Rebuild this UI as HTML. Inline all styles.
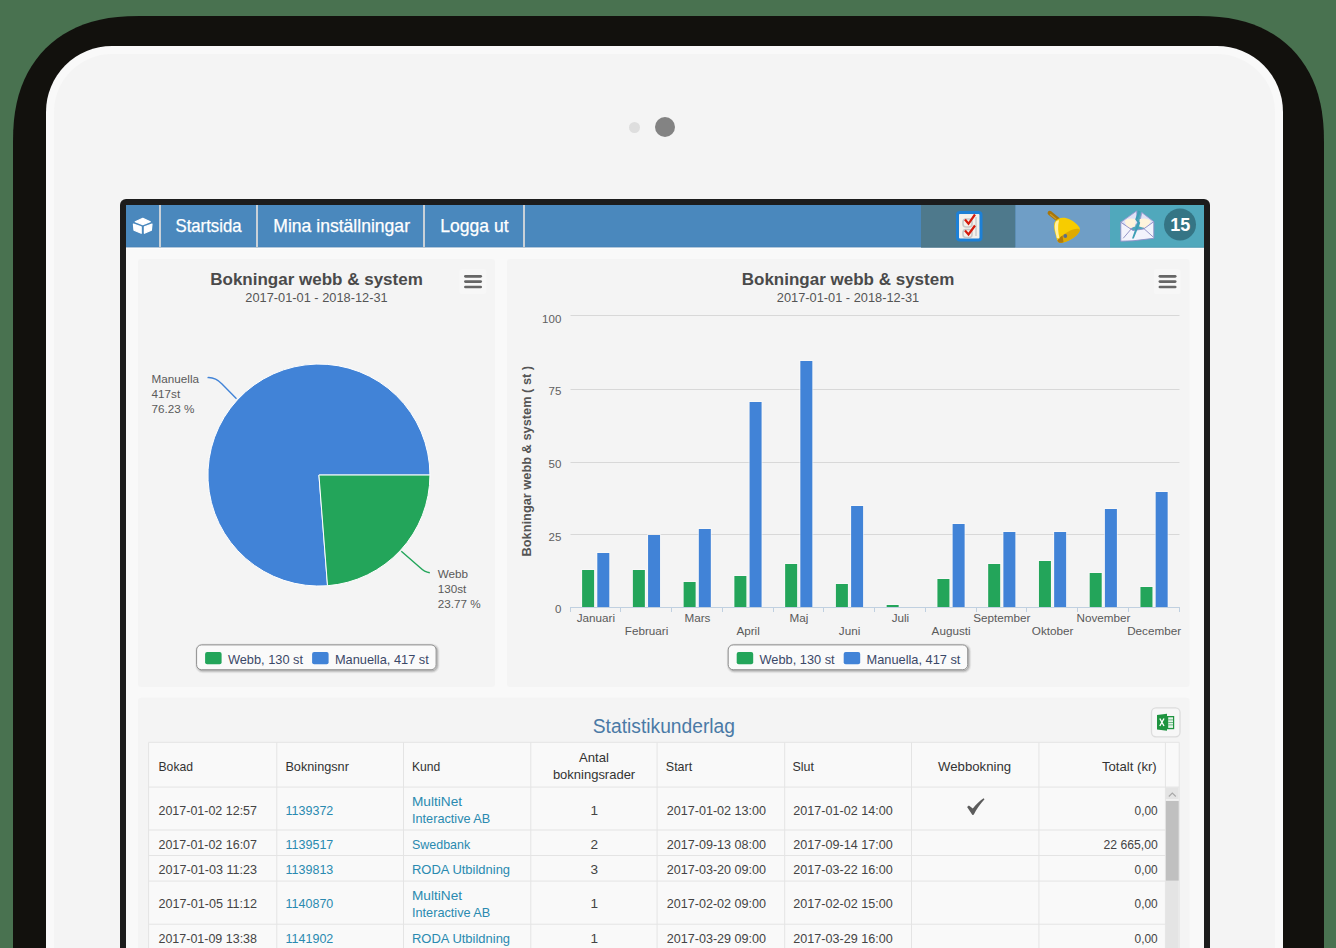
<!DOCTYPE html>
<html><head><meta charset="utf-8"><title>Statistik</title>
<style>
html,body{margin:0;padding:0;width:1336px;height:948px;overflow:hidden;background:#497250;font-family:"Liberation Sans",sans-serif;}
svg{display:block;position:absolute;left:0;top:0}
</style></head><body>
<svg width="1336" height="948" viewBox="0 0 1336 948">
<rect x="0" y="0" width="1336" height="948" fill="#497250"/>
<path d="M13.00,1100.00 L13.00,143.00 L13.23,130.65 L13.93,120.72 L15.09,111.58 L16.71,103.00 L18.78,94.86 L21.31,87.12 L24.28,79.76 L27.69,72.77 L31.53,66.15 L35.80,59.91 L40.48,54.04 L45.56,48.56 L51.04,43.48 L56.91,38.80 L63.15,34.53 L69.77,30.69 L76.76,27.28 L84.12,24.31 L91.86,21.78 L100.00,19.71 L108.58,18.09 L117.72,16.93 L127.65,16.23 L140.00,16.00 L1197.00,16.00 L1209.35,16.23 L1219.28,16.93 L1228.42,18.09 L1237.00,19.71 L1245.14,21.78 L1252.88,24.31 L1260.24,27.28 L1267.23,30.69 L1273.85,34.53 L1280.09,38.80 L1285.96,43.48 L1291.44,48.56 L1296.52,54.04 L1301.20,59.91 L1305.47,66.15 L1309.31,72.77 L1312.72,79.76 L1315.69,87.12 L1318.22,94.86 L1320.29,103.00 L1321.91,111.58 L1323.07,120.72 L1323.77,130.65 L1324.00,143.00 L1324.00,1100.00 Z" fill="#12110d"/>
<rect x="46" y="46" width="1237" height="1100" rx="66" ry="66" fill="#f9f9f9"/>
<rect x="54" y="54" width="1221" height="1100" rx="58" ry="58" fill="#f4f4f4"/>
<circle cx="634.5" cy="127.5" r="5.5" fill="#dedede"/>
<circle cx="665" cy="127" r="10" fill="#838383"/>
<rect x="120" y="199" width="1090" height="900" rx="6" ry="6" fill="#1c1c1c"/>
<rect x="126" y="205" width="1078" height="900" fill="#f9f9f9"/>
<rect x="126" y="205" width="1078" height="42.6" fill="#4a88bd"/>
<rect x="126" y="247.6" width="1078" height="1.2" fill="#fefefe"/>
<rect x="159" y="205" width="2" height="42.6" fill="#c9d1d8"/>
<rect x="256" y="205" width="2" height="42.6" fill="#c9d1d8"/>
<rect x="423" y="205" width="2" height="42.6" fill="#c9d1d8"/>
<rect x="523" y="205" width="2" height="42.6" fill="#c9d1d8"/>
<rect x="921" y="205" width="94.5" height="42.6" fill="#4e798c"/>
<rect x="1015.5" y="205" width="94.5" height="42.6" fill="#6f9ec6"/>
<rect x="1110" y="205" width="94" height="42.6" fill="#50a8bc"/>
<rect x="126" y="246.8" width="1078" height="0.8" fill="#000" fill-opacity="0.08"/>
<g fill="#ffffff" stroke="#ffffff" stroke-width="1.2" stroke-linejoin="round"><polygon points="142.8,218.3 150.3,221.8 142.8,224.6 135.2,221.8"/><polygon points="133.4,224 141.2,226.9 141.2,233.3 134,230.3"/><polygon points="144.4,226.9 152,224 151.4,230.3 144.4,233.3"/></g>
<text x="175.5" y="232" font-family="Liberation Sans" font-size="17.8" fill="#ffffff" stroke="#ffffff" stroke-width="0.25" textLength="66" lengthAdjust="spacingAndGlyphs">Startsida</text>
<text x="273.3" y="232" font-family="Liberation Sans" font-size="17.8" fill="#ffffff" stroke="#ffffff" stroke-width="0.25" textLength="136.7" lengthAdjust="spacingAndGlyphs">Mina inställningar</text>
<text x="440.3" y="232" font-family="Liberation Sans" font-size="17.8" fill="#ffffff" stroke="#ffffff" stroke-width="0.25" textLength="68.2" lengthAdjust="spacingAndGlyphs">Logga ut</text>
<rect x="957.5" y="212.5" width="23.5" height="27.5" rx="2.5" fill="#eeeeee" stroke="#1d80d6" stroke-width="3"/>
<rect x="959.5" y="214.5" width="19.5" height="23.5" fill="#f4f1ec"/>
<rect x="963" y="219" width="9" height="8" rx="3" fill="none" stroke="#c8c8c8" stroke-width="1.6"/>
<rect x="963" y="229.5" width="9" height="8" rx="3" fill="none" stroke="#c8c8c8" stroke-width="1.6"/>
<rect x="975" y="217" width="2" height="19" fill="#d6d6d6"/>
<polyline points="965,219.5 968.5,223.8 975,214.5" fill="none" stroke="#d41a0c" stroke-width="2.2" stroke-linejoin="miter"/>
<polyline points="965,230.5 968.5,234.5 975,225.5" fill="none" stroke="#d41a0c" stroke-width="2.2" stroke-linejoin="miter"/>
<line x1="1049.8" y1="213" x2="1058" y2="219.6" stroke="#a8760a" stroke-width="4.4" stroke-linecap="round"/>
<line x1="1050.5" y1="214.5" x2="1056" y2="219" stroke="#c99a2a" stroke-width="1.2" stroke-linecap="round"/>
<path d="M1054.5,222.5 C1057,217.5 1064,216.5 1070,219.5 C1074,221.5 1077,224 1079.5,227.5 C1080.5,230 1079,233.5 1075,236.5 C1071,239.5 1066,242 1061,242.8 C1058.5,243 1057.5,241.5 1057,239.5 C1056,235 1053,229 1054.5,222.5 Z" fill="#f7cc00"/>
<path d="M1057.5,240.5 C1061,236 1067,231.5 1073,229.5 C1077,228.3 1080,228.8 1079.8,230.5 C1079,234 1073,239 1066,241.8 C1061.5,243.3 1058,243.2 1057.5,240.5 Z" fill="#e0aa00"/>
<path d="M1057.5,240.5 C1058.5,238.5 1060.5,236.8 1062.5,235.5 L1063.5,242.2 C1060.5,243.2 1058,243 1057.5,240.5 Z" fill="#b07a0c"/>
<path d="M1056.8,238 C1056,233 1053.6,228 1055.3,222.8 C1056,221 1058,220 1059,220.5 C1057.5,226 1058,232 1059.5,238.5 Z" fill="#fff0a0"/>
<circle cx="1065.3" cy="236" r="1.9" fill="#5a6e8a"/>
<polygon points="1120.8,222.3 1136.6,211 1137.5,223 1131,229" fill="#dfe2f6" stroke="#9a9ad0" stroke-width="0.9" stroke-linejoin="round"/>
<polygon points="1141.8,212.5 1153.8,221.7 1145,229 1139.5,223" fill="#dfe2f6" stroke="#9a9ad0" stroke-width="0.9" stroke-linejoin="round"/>
<path d="M1124.8,221 C1126,218.5 1131,217.8 1135.8,219 L1135.2,226.5 L1127,229 Z" fill="#fff4dc"/>
<path d="M1139.8,219 C1144,217.8 1149,218.2 1150.8,221.5 L1146,228.5 L1139.2,226.5 Z" fill="#fff4dc"/>
<path d="M1120.8,222.3 L1133,230.5 L1143.5,229 L1153.8,221.7 L1153.8,238.3 L1133,240.8 L1120.8,241.2 Z" fill="#f3f3fc" stroke="#9090c8" stroke-width="0.9" stroke-linejoin="round"/>
<path d="M1123.2,238.3 L1131.5,228.6 M1143,227.8 L1153.2,237" stroke="#8a8ac0" stroke-width="0.9" fill="none"/>
<path d="M1138.3,210.5 L1135.2,219.5 L1137.6,222.5 L1132,238.5 L1133.8,238.5 L1140.2,222.8 L1137.6,219.8 L1140.6,211.5 Z" fill="#3f9fb6"/>
<circle cx="1180" cy="224.5" r="16" fill="#357585"/>
<text x="1180.3" y="230.8" font-family="Liberation Sans" font-size="18" font-weight="bold" fill="#ffffff" text-anchor="middle">15</text>
<rect x="138" y="259" width="357" height="428" rx="3" fill="#f4f4f4"/>
<rect x="507" y="259" width="682.5" height="428" rx="3" fill="#f4f4f4"/>
<rect x="138" y="697.8" width="1051.5" height="300" rx="3" fill="#f4f4f4"/>
<rect x="459.5" y="269.2" width="26.7" height="24.9" rx="2" fill="#f7f7f7"/>
<line x1="465.4" y1="276.3" x2="480.7" y2="276.3" stroke="#666666" stroke-width="2.7" stroke-linecap="round"/>
<line x1="465.4" y1="281.6" x2="480.7" y2="281.6" stroke="#666666" stroke-width="2.7" stroke-linecap="round"/>
<line x1="465.4" y1="287.0" x2="480.7" y2="287.0" stroke="#666666" stroke-width="2.7" stroke-linecap="round"/>
<text x="316.5" y="285.4" font-family="Liberation Sans" font-size="17" font-weight="bold" fill="#4a4a4a" text-anchor="middle">Bokningar webb &amp; system</text>
<text x="316.5" y="301.5" font-family="Liberation Sans" font-size="12.8" fill="#555555" text-anchor="middle">2017-01-01 - 2018-12-31</text>
<rect x="197.6" y="645.9" width="239.5" height="24.8" rx="5" fill="none" stroke="#000" stroke-opacity="0.05" stroke-width="5"/>
<rect x="197.6" y="645.9" width="239.5" height="24.8" rx="5" fill="none" stroke="#000" stroke-opacity="0.10" stroke-width="3"/>
<rect x="197.6" y="645.9" width="239.5" height="24.8" rx="5" fill="none" stroke="#000" stroke-opacity="0.15" stroke-width="1"/>
<rect x="196.6" y="644.9" width="239.5" height="24.8" rx="5" fill="#fafafa" stroke="#909090" stroke-width="1"/>
<rect x="205.1" y="652" width="16.5" height="12.3" rx="2" fill="#23a55a"/>
<text x="227.9" y="663.5" font-family="Liberation Sans" font-size="12.8" fill="#3a4868">Webb, 130 st</text>
<rect x="312.1" y="652" width="16.5" height="12.3" rx="2" fill="#4183d7"/>
<text x="334.9" y="663.5" font-family="Liberation Sans" font-size="12.8" fill="#3a4868">Manuella, 417 st</text>
<rect x="1154.0" y="269.2" width="26.7" height="24.9" rx="2" fill="#f7f7f7"/>
<line x1="1159.9" y1="276.3" x2="1175.2" y2="276.3" stroke="#666666" stroke-width="2.7" stroke-linecap="round"/>
<line x1="1159.9" y1="281.6" x2="1175.2" y2="281.6" stroke="#666666" stroke-width="2.7" stroke-linecap="round"/>
<line x1="1159.9" y1="287.0" x2="1175.2" y2="287.0" stroke="#666666" stroke-width="2.7" stroke-linecap="round"/>
<text x="848.0" y="285.4" font-family="Liberation Sans" font-size="17" font-weight="bold" fill="#4a4a4a" text-anchor="middle">Bokningar webb &amp; system</text>
<text x="848.0" y="301.5" font-family="Liberation Sans" font-size="12.8" fill="#555555" text-anchor="middle">2017-01-01 - 2018-12-31</text>
<rect x="729.2" y="645.9" width="239.5" height="24.8" rx="5" fill="none" stroke="#000" stroke-opacity="0.05" stroke-width="5"/>
<rect x="729.2" y="645.9" width="239.5" height="24.8" rx="5" fill="none" stroke="#000" stroke-opacity="0.10" stroke-width="3"/>
<rect x="729.2" y="645.9" width="239.5" height="24.8" rx="5" fill="none" stroke="#000" stroke-opacity="0.15" stroke-width="1"/>
<rect x="728.2" y="644.9" width="239.5" height="24.8" rx="5" fill="#fafafa" stroke="#909090" stroke-width="1"/>
<rect x="736.7" y="652" width="16.5" height="12.3" rx="2" fill="#23a55a"/>
<text x="759.5" y="663.5" font-family="Liberation Sans" font-size="12.8" fill="#3a4868">Webb, 130 st</text>
<rect x="843.7" y="652" width="16.5" height="12.3" rx="2" fill="#4183d7"/>
<text x="866.5" y="663.5" font-family="Liberation Sans" font-size="12.8" fill="#3a4868">Manuella, 417 st</text>
<path d="M318.95,475.05 L327.52,585.72 A111.0,111.0 0 1,1 429.95,475.05 Z" fill="#4183d7" stroke="#ffffff" stroke-width="1" stroke-linejoin="round"/>
<path d="M318.95,475.05 L429.95,475.05 A111.0,111.0 0 0,1 327.52,585.72 Z" fill="#23a55a" stroke="#ffffff" stroke-width="1" stroke-linejoin="round"/>
<path d="M207.5,377.6 C213,377.2 217,378.8 222,384 L236.5,398.8" fill="none" stroke="#4183d7" stroke-width="1.4"/>
<path d="M401.3,551.3 L419.4,567 C423,570.5 426,572.3 429.8,572.8" fill="none" stroke="#23a55a" stroke-width="1.4"/>
<text x="151.6" y="382.8" font-family="Liberation Sans" font-size="11.7" fill="#5a5a5a">Manuella</text>
<text x="151.6" y="397.7" font-family="Liberation Sans" font-size="11.7" fill="#5a5a5a">417st</text>
<text x="151.6" y="412.6" font-family="Liberation Sans" font-size="11.7" fill="#5a5a5a">76.23 %</text>
<text x="437.7" y="577.5" font-family="Liberation Sans" font-size="11.7" fill="#5a5a5a">Webb</text>
<text x="437.7" y="592.6" font-family="Liberation Sans" font-size="11.7" fill="#5a5a5a">130st</text>
<text x="437.7" y="607.7" font-family="Liberation Sans" font-size="11.7" fill="#5a5a5a">23.77 %</text>
<rect x="570.5" y="315" width="609" height="1" fill="#d8d8d8"/>
<rect x="570.5" y="389" width="609" height="1" fill="#d8d8d8"/>
<rect x="570.5" y="462" width="609" height="1" fill="#d8d8d8"/>
<rect x="570.5" y="534" width="609" height="1" fill="#d8d8d8"/>
<text x="561.3" y="323.0" font-family="Liberation Sans" font-size="11.5" fill="#606060" text-anchor="end">100</text>
<text x="561.3" y="395.0" font-family="Liberation Sans" font-size="11.5" fill="#606060" text-anchor="end">75</text>
<text x="561.3" y="468.0" font-family="Liberation Sans" font-size="11.5" fill="#606060" text-anchor="end">50</text>
<text x="561.3" y="540.8" font-family="Liberation Sans" font-size="11.5" fill="#606060" text-anchor="end">25</text>
<text x="561.3" y="613.0" font-family="Liberation Sans" font-size="11.5" fill="#606060" text-anchor="end">0</text>
<text transform="translate(531.2,461.2) rotate(-90)" x="0" y="0" font-family="Liberation Sans" font-size="12.8" font-weight="bold" fill="#555555" text-anchor="middle">Bokningar webb &amp; system ( st )</text>
<rect x="581.10" y="569" width="14" height="38" fill="#fcfcfc" fill-opacity="0.55"/>
<rect x="582.10" y="570" width="12" height="37" fill="#23a55a"/>
<rect x="596.30" y="552" width="14" height="55" fill="#fcfcfc" fill-opacity="0.55"/>
<rect x="597.30" y="553" width="12" height="54" fill="#4183d7"/>
<text x="595.9" y="621.6" font-family="Liberation Sans" font-size="11.7" fill="#5a5a5a" text-anchor="middle">Januari</text>
<rect x="631.86" y="569" width="14" height="38" fill="#fcfcfc" fill-opacity="0.55"/>
<rect x="632.86" y="570" width="12" height="37" fill="#23a55a"/>
<rect x="647.06" y="534" width="14" height="73" fill="#fcfcfc" fill-opacity="0.55"/>
<rect x="648.06" y="535" width="12" height="72" fill="#4183d7"/>
<text x="646.6" y="635.3" font-family="Liberation Sans" font-size="11.7" fill="#5a5a5a" text-anchor="middle">Februari</text>
<rect x="682.62" y="581" width="14" height="26" fill="#fcfcfc" fill-opacity="0.55"/>
<rect x="683.62" y="582" width="12" height="25" fill="#23a55a"/>
<rect x="697.82" y="528" width="14" height="79" fill="#fcfcfc" fill-opacity="0.55"/>
<rect x="698.82" y="529" width="12" height="78" fill="#4183d7"/>
<text x="697.4" y="621.6" font-family="Liberation Sans" font-size="11.7" fill="#5a5a5a" text-anchor="middle">Mars</text>
<rect x="733.38" y="575" width="14" height="32" fill="#fcfcfc" fill-opacity="0.55"/>
<rect x="734.38" y="576" width="12" height="31" fill="#23a55a"/>
<rect x="748.58" y="401" width="14" height="206" fill="#fcfcfc" fill-opacity="0.55"/>
<rect x="749.58" y="402" width="12" height="205" fill="#4183d7"/>
<text x="748.1" y="635.3" font-family="Liberation Sans" font-size="11.7" fill="#5a5a5a" text-anchor="middle">April</text>
<rect x="784.14" y="563" width="14" height="44" fill="#fcfcfc" fill-opacity="0.55"/>
<rect x="785.14" y="564" width="12" height="43" fill="#23a55a"/>
<rect x="799.34" y="360" width="14" height="247" fill="#fcfcfc" fill-opacity="0.55"/>
<rect x="800.34" y="361" width="12" height="246" fill="#4183d7"/>
<text x="798.9" y="621.6" font-family="Liberation Sans" font-size="11.7" fill="#5a5a5a" text-anchor="middle">Maj</text>
<rect x="834.90" y="583" width="14" height="24" fill="#fcfcfc" fill-opacity="0.55"/>
<rect x="835.90" y="584" width="12" height="23" fill="#23a55a"/>
<rect x="850.10" y="505" width="14" height="102" fill="#fcfcfc" fill-opacity="0.55"/>
<rect x="851.10" y="506" width="12" height="101" fill="#4183d7"/>
<text x="849.6" y="635.3" font-family="Liberation Sans" font-size="11.7" fill="#5a5a5a" text-anchor="middle">Juni</text>
<rect x="885.66" y="604" width="14" height="3" fill="#fcfcfc" fill-opacity="0.55"/>
<rect x="886.66" y="605" width="12" height="2" fill="#23a55a"/>
<text x="900.4" y="621.6" font-family="Liberation Sans" font-size="11.7" fill="#5a5a5a" text-anchor="middle">Juli</text>
<rect x="936.42" y="578" width="14" height="29" fill="#fcfcfc" fill-opacity="0.55"/>
<rect x="937.42" y="579" width="12" height="28" fill="#23a55a"/>
<rect x="951.62" y="523" width="14" height="84" fill="#fcfcfc" fill-opacity="0.55"/>
<rect x="952.62" y="524" width="12" height="83" fill="#4183d7"/>
<text x="951.1" y="635.3" font-family="Liberation Sans" font-size="11.7" fill="#5a5a5a" text-anchor="middle">Augusti</text>
<rect x="987.18" y="563" width="14" height="44" fill="#fcfcfc" fill-opacity="0.55"/>
<rect x="988.18" y="564" width="12" height="43" fill="#23a55a"/>
<rect x="1002.38" y="531" width="14" height="76" fill="#fcfcfc" fill-opacity="0.55"/>
<rect x="1003.38" y="532" width="12" height="75" fill="#4183d7"/>
<text x="1001.9" y="621.6" font-family="Liberation Sans" font-size="11.7" fill="#5a5a5a" text-anchor="middle">September</text>
<rect x="1037.94" y="560" width="14" height="47" fill="#fcfcfc" fill-opacity="0.55"/>
<rect x="1038.94" y="561" width="12" height="46" fill="#23a55a"/>
<rect x="1053.14" y="531" width="14" height="76" fill="#fcfcfc" fill-opacity="0.55"/>
<rect x="1054.14" y="532" width="12" height="75" fill="#4183d7"/>
<text x="1052.6" y="635.3" font-family="Liberation Sans" font-size="11.7" fill="#5a5a5a" text-anchor="middle">Oktober</text>
<rect x="1088.70" y="572" width="14" height="35" fill="#fcfcfc" fill-opacity="0.55"/>
<rect x="1089.70" y="573" width="12" height="34" fill="#23a55a"/>
<rect x="1103.90" y="508" width="14" height="99" fill="#fcfcfc" fill-opacity="0.55"/>
<rect x="1104.90" y="509" width="12" height="98" fill="#4183d7"/>
<text x="1103.4" y="621.6" font-family="Liberation Sans" font-size="11.7" fill="#5a5a5a" text-anchor="middle">November</text>
<rect x="1139.46" y="586" width="14" height="21" fill="#fcfcfc" fill-opacity="0.55"/>
<rect x="1140.46" y="587" width="12" height="20" fill="#23a55a"/>
<rect x="1154.66" y="491" width="14" height="116" fill="#fcfcfc" fill-opacity="0.55"/>
<rect x="1155.66" y="492" width="12" height="115" fill="#4183d7"/>
<text x="1154.1" y="635.3" font-family="Liberation Sans" font-size="11.7" fill="#5a5a5a" text-anchor="middle">December</text>
<rect x="570" y="607" width="610" height="1" fill="#c0d0e0"/>
<rect x="570" y="607" width="1" height="5" fill="#c0d0e0"/>
<rect x="620" y="607" width="1" height="5" fill="#c0d0e0"/>
<rect x="671" y="607" width="1" height="5" fill="#c0d0e0"/>
<rect x="722" y="607" width="1" height="5" fill="#c0d0e0"/>
<rect x="773" y="607" width="1" height="5" fill="#c0d0e0"/>
<rect x="823" y="607" width="1" height="5" fill="#c0d0e0"/>
<rect x="874" y="607" width="1" height="5" fill="#c0d0e0"/>
<rect x="925" y="607" width="1" height="5" fill="#c0d0e0"/>
<rect x="976" y="607" width="1" height="5" fill="#c0d0e0"/>
<rect x="1026" y="607" width="1" height="5" fill="#c0d0e0"/>
<rect x="1077" y="607" width="1" height="5" fill="#c0d0e0"/>
<rect x="1128" y="607" width="1" height="5" fill="#c0d0e0"/>
<rect x="1179" y="607" width="1" height="5" fill="#c0d0e0"/>
<text x="592.8" y="733.4" font-family="Liberation Sans" font-size="20" fill="#4a7aa6" textLength="142.2" lengthAdjust="spacingAndGlyphs">Statistikunderlag</text>
<rect x="1151.5" y="707.8" width="28.5" height="29" rx="4.5" fill="#f7f7f7" stroke="#dcdcdc" stroke-width="1.3"/>
<path d="M1157,715 L1167,713.8 L1167,730.8 L1157,729.5 Z" fill="#1f9440"/>
<rect x="1167" y="716" width="7.2" height="13.2" fill="#1f9440"/>
<rect x="1168.2" y="717.3" width="4.8" height="10.6" fill="#e6f3e9"/>
<rect x="1168.2" y="719.5" width="4.8" height="0.8" fill="#4aa86a"/>
<rect x="1168.2" y="722.0" width="4.8" height="0.8" fill="#4aa86a"/>
<rect x="1168.2" y="724.5" width="4.8" height="0.8" fill="#4aa86a"/>
<path d="M1159.8,718.5 L1164,726 M1164,718.5 L1159.8,726" stroke="#ffffff" stroke-width="1.4"/>
<rect x="148.6" y="742.3" width="1030.6" height="300" fill="#f9f9f9"/>
<rect x="148.6" y="741.8" width="1030.6" height="1" fill="#e4e4e4"/>
<rect x="148.6" y="786.6" width="1016.8" height="1" fill="#e4e4e4"/>
<rect x="148.6" y="829.5" width="1016.8" height="1" fill="#e4e4e4"/>
<rect x="148.6" y="855.0" width="1016.8" height="1" fill="#e4e4e4"/>
<rect x="148.6" y="880.6" width="1016.8" height="1" fill="#e4e4e4"/>
<rect x="148.6" y="923.7" width="1016.8" height="1" fill="#e4e4e4"/>
<rect x="1165.4" y="786.6" width="13.8" height="1" fill="#e4e4e4"/>
<rect x="148.1" y="742.3" width="1" height="300" fill="#e4e4e4"/>
<rect x="276.3" y="742.3" width="1" height="300" fill="#e4e4e4"/>
<rect x="403.0" y="742.3" width="1" height="300" fill="#e4e4e4"/>
<rect x="530.3" y="742.3" width="1" height="300" fill="#e4e4e4"/>
<rect x="656.6" y="742.3" width="1" height="300" fill="#e4e4e4"/>
<rect x="784.2" y="742.3" width="1" height="300" fill="#e4e4e4"/>
<rect x="911.0" y="742.3" width="1" height="300" fill="#e4e4e4"/>
<rect x="1038.4" y="742.3" width="1" height="300" fill="#e4e4e4"/>
<rect x="1164.9" y="742.3" width="1" height="300" fill="#e4e4e4"/>
<rect x="1178.7" y="742.3" width="1" height="300" fill="#e4e4e4"/>
<rect x="1165.9" y="787.3" width="12.8" height="200" fill="#e4e4e4"/>
<rect x="1165.9" y="800.9" width="12.8" height="79.7" fill="#c0c0c0"/>
<rect x="1165.9" y="799.2" width="12.8" height="1.5" fill="#f4f4f4"/>
<polyline points="1168.8,796.5 1172.3,793 1175.8,796.5" fill="none" stroke="#a8a8a8" stroke-width="1.1"/>
<text x="158.5" y="770.7" font-family="Liberation Sans" font-size="13.6" fill="#333333" textLength="34.5" lengthAdjust="spacingAndGlyphs">Bokad</text>
<text x="285.4" y="770.7" font-family="Liberation Sans" font-size="13.6" fill="#333333" textLength="63.5" lengthAdjust="spacingAndGlyphs">Bokningsnr</text>
<text x="412.0" y="770.7" font-family="Liberation Sans" font-size="13.6" fill="#333333" textLength="28.3" lengthAdjust="spacingAndGlyphs">Kund</text>
<text x="579.0" y="761.9" font-family="Liberation Sans" font-size="13.6" fill="#333333" textLength="29.9" lengthAdjust="spacingAndGlyphs">Antal</text>
<text x="552.9" y="778.9" font-family="Liberation Sans" font-size="13.6" fill="#333333" textLength="82.3" lengthAdjust="spacingAndGlyphs">bokningsrader</text>
<text x="665.8" y="770.7" font-family="Liberation Sans" font-size="13.6" fill="#333333" textLength="26.4" lengthAdjust="spacingAndGlyphs">Start</text>
<text x="792.5" y="770.7" font-family="Liberation Sans" font-size="13.6" fill="#333333" textLength="21.5" lengthAdjust="spacingAndGlyphs">Slut</text>
<text x="938.1" y="770.7" font-family="Liberation Sans" font-size="13.6" fill="#333333" textLength="73.0" lengthAdjust="spacingAndGlyphs">Webbokning</text>
<text x="1102.0" y="770.7" font-family="Liberation Sans" font-size="13.6" fill="#333333" textLength="54.7" lengthAdjust="spacingAndGlyphs">Totalt (kr)</text>
<text x="158.5" y="814.6" font-family="Liberation Sans" font-size="13.6" fill="#444444" textLength="98.5" lengthAdjust="spacingAndGlyphs">2017-01-02 12:57</text>
<text x="285.6" y="814.6" font-family="Liberation Sans" font-size="13.6" fill="#2a8ab0" textLength="47.7" lengthAdjust="spacingAndGlyphs">1139372</text>
<text x="412.0" y="806.0" font-family="Liberation Sans" font-size="13.6" fill="#2a8ab0" textLength="50.0" lengthAdjust="spacingAndGlyphs">MultiNet</text>
<text x="412.0" y="822.7" font-family="Liberation Sans" font-size="13.6" fill="#2a8ab0" textLength="78.3" lengthAdjust="spacingAndGlyphs">Interactive AB</text>
<text x="594.3" y="814.6" font-family="Liberation Sans" font-size="13.6" fill="#444444" text-anchor="middle">1</text>
<text x="666.7" y="814.6" font-family="Liberation Sans" font-size="13.6" fill="#444444" textLength="99.4" lengthAdjust="spacingAndGlyphs">2017-01-02 13:00</text>
<text x="793.3" y="814.6" font-family="Liberation Sans" font-size="13.6" fill="#444444" textLength="99.4" lengthAdjust="spacingAndGlyphs">2017-01-02 14:00</text>
<text x="1134.6" y="814.6" font-family="Liberation Sans" font-size="13.6" fill="#444444" textLength="23.1" lengthAdjust="spacingAndGlyphs">0,00</text>
<path d="M967.1,807.1 L968.9,805.6 L972.8,808.5 C976,804.5 980,800.5 983.6,798.2 L984.5,799.3 C980.5,803.5 976.5,809 973.7,814.8 L972.4,814.9 Z" fill="#5c5c5c"/>
<text x="158.5" y="848.6" font-family="Liberation Sans" font-size="13.6" fill="#444444" textLength="98.5" lengthAdjust="spacingAndGlyphs">2017-01-02 16:07</text>
<text x="285.6" y="848.6" font-family="Liberation Sans" font-size="13.6" fill="#2a8ab0" textLength="47.7" lengthAdjust="spacingAndGlyphs">1139517</text>
<text x="412.0" y="848.6" font-family="Liberation Sans" font-size="13.6" fill="#2a8ab0" textLength="58.2" lengthAdjust="spacingAndGlyphs">Swedbank</text>
<text x="594.3" y="848.6" font-family="Liberation Sans" font-size="13.6" fill="#444444" text-anchor="middle">2</text>
<text x="666.7" y="848.6" font-family="Liberation Sans" font-size="13.6" fill="#444444" textLength="99.4" lengthAdjust="spacingAndGlyphs">2017-09-13 08:00</text>
<text x="793.3" y="848.6" font-family="Liberation Sans" font-size="13.6" fill="#444444" textLength="99.4" lengthAdjust="spacingAndGlyphs">2017-09-14 17:00</text>
<text x="1103.5" y="848.6" font-family="Liberation Sans" font-size="13.6" fill="#444444" textLength="54.2" lengthAdjust="spacingAndGlyphs">22 665,00</text>
<text x="158.5" y="874.2" font-family="Liberation Sans" font-size="13.6" fill="#444444" textLength="98.5" lengthAdjust="spacingAndGlyphs">2017-01-03 11:23</text>
<text x="285.6" y="874.2" font-family="Liberation Sans" font-size="13.6" fill="#2a8ab0" textLength="47.7" lengthAdjust="spacingAndGlyphs">1139813</text>
<text x="412.0" y="874.2" font-family="Liberation Sans" font-size="13.6" fill="#2a8ab0" textLength="98.1" lengthAdjust="spacingAndGlyphs">RODA Utbildning</text>
<text x="594.3" y="874.2" font-family="Liberation Sans" font-size="13.6" fill="#444444" text-anchor="middle">3</text>
<text x="666.7" y="874.2" font-family="Liberation Sans" font-size="13.6" fill="#444444" textLength="99.4" lengthAdjust="spacingAndGlyphs">2017-03-20 09:00</text>
<text x="793.3" y="874.2" font-family="Liberation Sans" font-size="13.6" fill="#444444" textLength="99.4" lengthAdjust="spacingAndGlyphs">2017-03-22 16:00</text>
<text x="1134.6" y="874.2" font-family="Liberation Sans" font-size="13.6" fill="#444444" textLength="23.1" lengthAdjust="spacingAndGlyphs">0,00</text>
<text x="158.5" y="908.4" font-family="Liberation Sans" font-size="13.6" fill="#444444" textLength="98.5" lengthAdjust="spacingAndGlyphs">2017-01-05 11:12</text>
<text x="285.6" y="908.4" font-family="Liberation Sans" font-size="13.6" fill="#2a8ab0" textLength="47.7" lengthAdjust="spacingAndGlyphs">1140870</text>
<text x="412.0" y="899.8" font-family="Liberation Sans" font-size="13.6" fill="#2a8ab0" textLength="50.0" lengthAdjust="spacingAndGlyphs">MultiNet</text>
<text x="412.0" y="916.5" font-family="Liberation Sans" font-size="13.6" fill="#2a8ab0" textLength="78.3" lengthAdjust="spacingAndGlyphs">Interactive AB</text>
<text x="594.3" y="908.4" font-family="Liberation Sans" font-size="13.6" fill="#444444" text-anchor="middle">1</text>
<text x="666.7" y="908.4" font-family="Liberation Sans" font-size="13.6" fill="#444444" textLength="99.4" lengthAdjust="spacingAndGlyphs">2017-02-02 09:00</text>
<text x="793.3" y="908.4" font-family="Liberation Sans" font-size="13.6" fill="#444444" textLength="99.4" lengthAdjust="spacingAndGlyphs">2017-02-02 15:00</text>
<text x="1134.6" y="908.4" font-family="Liberation Sans" font-size="13.6" fill="#444444" textLength="23.1" lengthAdjust="spacingAndGlyphs">0,00</text>
<text x="158.5" y="942.9" font-family="Liberation Sans" font-size="13.6" fill="#444444" textLength="98.5" lengthAdjust="spacingAndGlyphs">2017-01-09 13:38</text>
<text x="285.6" y="942.9" font-family="Liberation Sans" font-size="13.6" fill="#2a8ab0" textLength="47.7" lengthAdjust="spacingAndGlyphs">1141902</text>
<text x="412.0" y="942.9" font-family="Liberation Sans" font-size="13.6" fill="#2a8ab0" textLength="98.1" lengthAdjust="spacingAndGlyphs">RODA Utbildning</text>
<text x="594.3" y="942.9" font-family="Liberation Sans" font-size="13.6" fill="#444444" text-anchor="middle">1</text>
<text x="666.7" y="942.9" font-family="Liberation Sans" font-size="13.6" fill="#444444" textLength="99.4" lengthAdjust="spacingAndGlyphs">2017-03-29 09:00</text>
<text x="793.3" y="942.9" font-family="Liberation Sans" font-size="13.6" fill="#444444" textLength="99.4" lengthAdjust="spacingAndGlyphs">2017-03-29 16:00</text>
<text x="1134.6" y="942.9" font-family="Liberation Sans" font-size="13.6" fill="#444444" textLength="23.1" lengthAdjust="spacingAndGlyphs">0,00</text>
</svg>
</body></html>
